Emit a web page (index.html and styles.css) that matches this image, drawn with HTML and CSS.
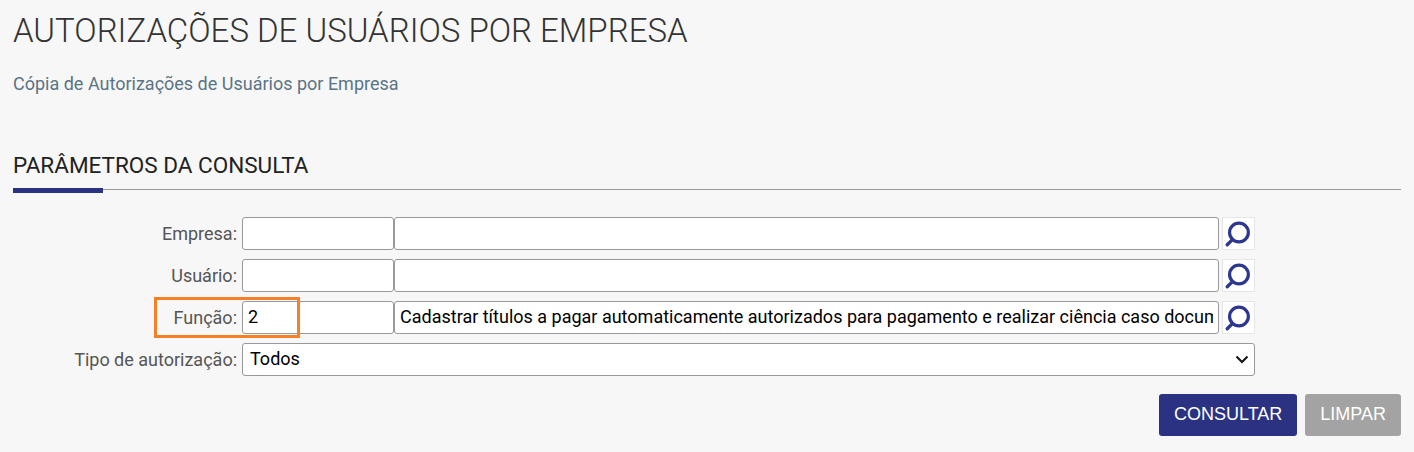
FILE: index.html
```html
<!DOCTYPE html>
<html lang="pt-BR">
<head>
<meta charset="utf-8">
<title>Autorizações de Usuários por Empresa</title>
<link rel="stylesheet" href="styles.css">
</head>
<body>
    <h1 class="page-title">AUTORIZAÇÕES DE USUÁRIOS POR EMPRESA</h1>
    <p class="page-sub">Cópia de Autorizações de Usuários por Empresa</p>

    <h2 class="section-title">PARÂMETROS DA CONSULTA</h2>

    <form class="form">
        <label class="lbl">Empresa:</label>
        <div class="field">
            <input class="inp code" type="text">
            <input class="inp desc" type="text">
            <button class="lookup" type="button">
                <svg width="33" height="33" viewBox="0 0 33 33"><circle cx="17" cy="15.5" r="10" class="lens"/><path d="M10 23 4.5 28.5" class="handle"/></svg>
            </button>
        </div>

        <label class="lbl">Usuário:</label>
        <div class="field">
            <input class="inp code" type="text">
            <input class="inp desc" type="text">
            <button class="lookup" type="button">
                <svg width="33" height="33" viewBox="0 0 33 33"><circle cx="17" cy="15.5" r="10" class="lens"/><path d="M10 23 4.5 28.5" class="handle"/></svg>
            </button>
        </div>

        <label class="lbl">Função:</label>
        <div class="field">
            <input class="inp code" type="text" value="2">
            <input class="inp desc" type="text" value="Cadastrar títulos a pagar automaticamente autorizados para pagamento e realizar ciência caso documento não esteja autorizado">
            <button class="lookup" type="button">
                <svg width="33" height="33" viewBox="0 0 33 33"><circle cx="17" cy="15.5" r="10" class="lens"/><path d="M10 23 4.5 28.5" class="handle"/></svg>
            </button>
            <div class="highlight"></div>
        </div>

        <label class="lbl">Tipo de autorização:</label>
        <div class="field">
            <select class="sel">
                <option>Todos</option>
            </select>
            <svg class="chevron" width="14" height="9" viewBox="0 0 14 9"><path d="M1.5 1.5 7 7 12.5 1.5"/></svg>
        </div>
    </form>

    <div class="actions">
        <button class="btn primary" type="button">CONSULTAR</button>
        <button class="btn muted" type="button">LIMPAR</button>
    </div>
</body>
</html>
```

FILE: styles.css
```css
body {
    margin:0;
    padding:0 13px;
    background-color:#f7f7f7;
    font-family:Roboto, sans-serif;
    color:#333;
}

.page-title {
    margin:0;
    padding-top:13px;
    font-size:33px;
    line-height:36px;
    font-weight:300;
    color:#333;
}

.page-sub {
    margin:0;
    padding-top:24px;
    font-size:18px;
    line-height:22px;
    color:#5a7485;
}

.section-title {
    margin:0;
    margin-top:59px;
    height:35px;
    font-size:22.5px;
    line-height:22px;
    font-weight:400;
    color:#222;
    border-bottom:1px solid #999;
    position:relative;
}

.section-title::after {
    content:"";
    position:absolute;
    left:0;
    bottom:-4px;
    width:90px;
    height:5px;
    background-color:#2b3282;
}

.form {
    display:grid;
    grid-template-columns:224px 1018px;
    row-gap:9px;
    margin-top:27px;
}

.lbl {
    text-align:right;
    font-size:18px;
    line-height:33px;
    color:#555;
}

.field {
    display:flex;
    position:relative;
    height:33px;
    padding-left:5px;
}

.inp, .sel {
    box-sizing:border-box;
    height:33px;
    margin:0;
    border:1px solid #999;
    border-radius:3px;
    background-color:#fff;
    font-family:Roboto, sans-serif;
    font-size:18px;
    color:#000;
    padding:0 5px 2px;
    outline:none;
}

.code {
    width:152px;
}

.desc {
    width:825px;
}

.sel {
    width:1013px;
    padding:0 7px 2px;
    appearance:none;
}

.chevron {
    position:absolute;
    right:6px;
    top:12px;
    fill:none;
    stroke:#111;
    stroke-width:2;
}

.lookup {
    box-sizing:border-box;
    width:33px;
    height:33px;
    margin-left:3px;
    padding:0;
    border:1px solid #e6e6e6;
    background-color:#fff;
    display:flex;
    align-items:center;
    justify-content:center;
}

.lens {
    fill:none;
    stroke:#2e3790;
    stroke-width:3.4;
}

.handle {
    fill:none;
    stroke:#2e3790;
    stroke-width:3.6;
    stroke-linecap:round;
}

.highlight {
    position:absolute;
    left:-83px;
    top:-4px;
    width:146px;
    height:41px;
    box-sizing:border-box;
    border:3px solid #f58025;
    pointer-events:none;
}

.actions {
    display:flex;
    justify-content:flex-end;
    gap:8px;
    margin-top:18px;
}

.btn {
    height:42px;
    border:0;
    border-radius:3px;
    color:#fff;
    font-family:"Liberation Sans", Arial, sans-serif;
    font-size:18px;
    padding:0 15px 2px;
}

.primary {
    background-color:#2b3282;
}

.muted {
    background-color:#a3a3a3;
}
```
